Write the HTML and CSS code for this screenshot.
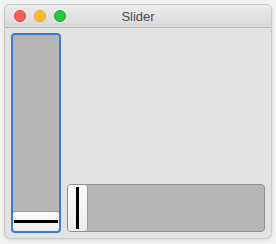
FILE: index.html
```html
<!DOCTYPE html>
<html>
<head>
<meta charset="utf-8">
<link rel="stylesheet" href="styles.css">
</head>
<body>
<div class="window">
  <div class="titlebar">
    <div class="lights">
      <span class="light red"></span>
      <span class="light yellow"></span>
      <span class="light green"></span>
    </div>
    <div class="title">Slider</div>
  </div>
  <div class="content">
    <div class="vslider">
      <div class="vthumb"><span class="hline"></span></div>
    </div>
    <div class="hslider">
      <div class="hthumb"><span class="vline"></span></div>
    </div>
  </div>
</div>
</body>
</html>
```
FILE: styles.css
```css
html, body {
  margin: 0;
  padding: 0;
  background: #f3f3f3;
  width: 276px;
  height: 244px;
  overflow: hidden;
}
body {
  padding: 5px 5px 0 5px;
  box-sizing: border-box;
  font-family: "Liberation Sans", Arial, sans-serif;
}
.window {
  width: 266px;
  height: 233px;
  border-radius: 5px;
  background: #e3e3e3;
  box-shadow: 0 0 0 1px #c9c9c9, 0 1px 4px rgba(0,0,0,0.18);
  overflow: hidden;
  display: flex;
  flex-direction: column;
}
.titlebar {
  height: 22px;
  flex: none;
  position: relative;
  background: linear-gradient(#ececec, #d9d9d9);
  border-bottom: 1px solid #b9b9b9;
  display: flex;
  align-items: center;
}
.lights {
  display: flex;
  gap: 8px;
  padding-left: 9px;
}
.light {
  width: 12px;
  height: 12px;
  border-radius: 50%;
  box-sizing: border-box;
}
.red { background: #fc5f57; border: 1px solid #e0443e; }
.yellow { background: #fdbc2e; border: 1px solid #dea123; }
.green { background: #28c840; border: 1px solid #1aab29; }
.title {
  position: absolute;
  left: 0;
  right: 0;
  top: 0;
  line-height: 23px;
  text-align: center;
  font-size: 13px;
  color: #4c4c4c;
}
.content {
  flex: 1;
  display: flex;
  gap: 6px;
  padding: 5px 6px 5px 6px;
  align-items: flex-end;
}
.vslider {
  width: 50px;
  height: 200px;
  box-sizing: border-box;
  border: 2px solid #3d7bd3;
  border-radius: 4px;
  background: #b5b5b5;
  display: flex;
  flex-direction: column;
  justify-content: flex-end;
}
.vthumb {
  height: 19px;
  background: linear-gradient(#fbfbfb, #ececec);
  border-top: 1px solid #9a9a9a;
  border-radius: 3px;
  display: flex;
  align-items: center;
  justify-content: center;
}
.hline {
  width: 44px;
  height: 3px;
  background: #000;
}
.hslider {
  width: 198px;
  height: 48px;
  box-sizing: border-box;
  border: 1px solid #8e8e8e;
  border-radius: 4px;
  background: #b5b5b5;
  display: flex;
  margin-bottom: 1px;
}
.hthumb {
  width: 19px;
  background: linear-gradient(#fbfbfb, #ececec);
  border-right: 1px solid #9a9a9a;
  border-radius: 3px;
  display: flex;
  align-items: center;
  justify-content: center;
}
.vline {
  width: 3px;
  height: 42px;
  background: #000;
}
```
